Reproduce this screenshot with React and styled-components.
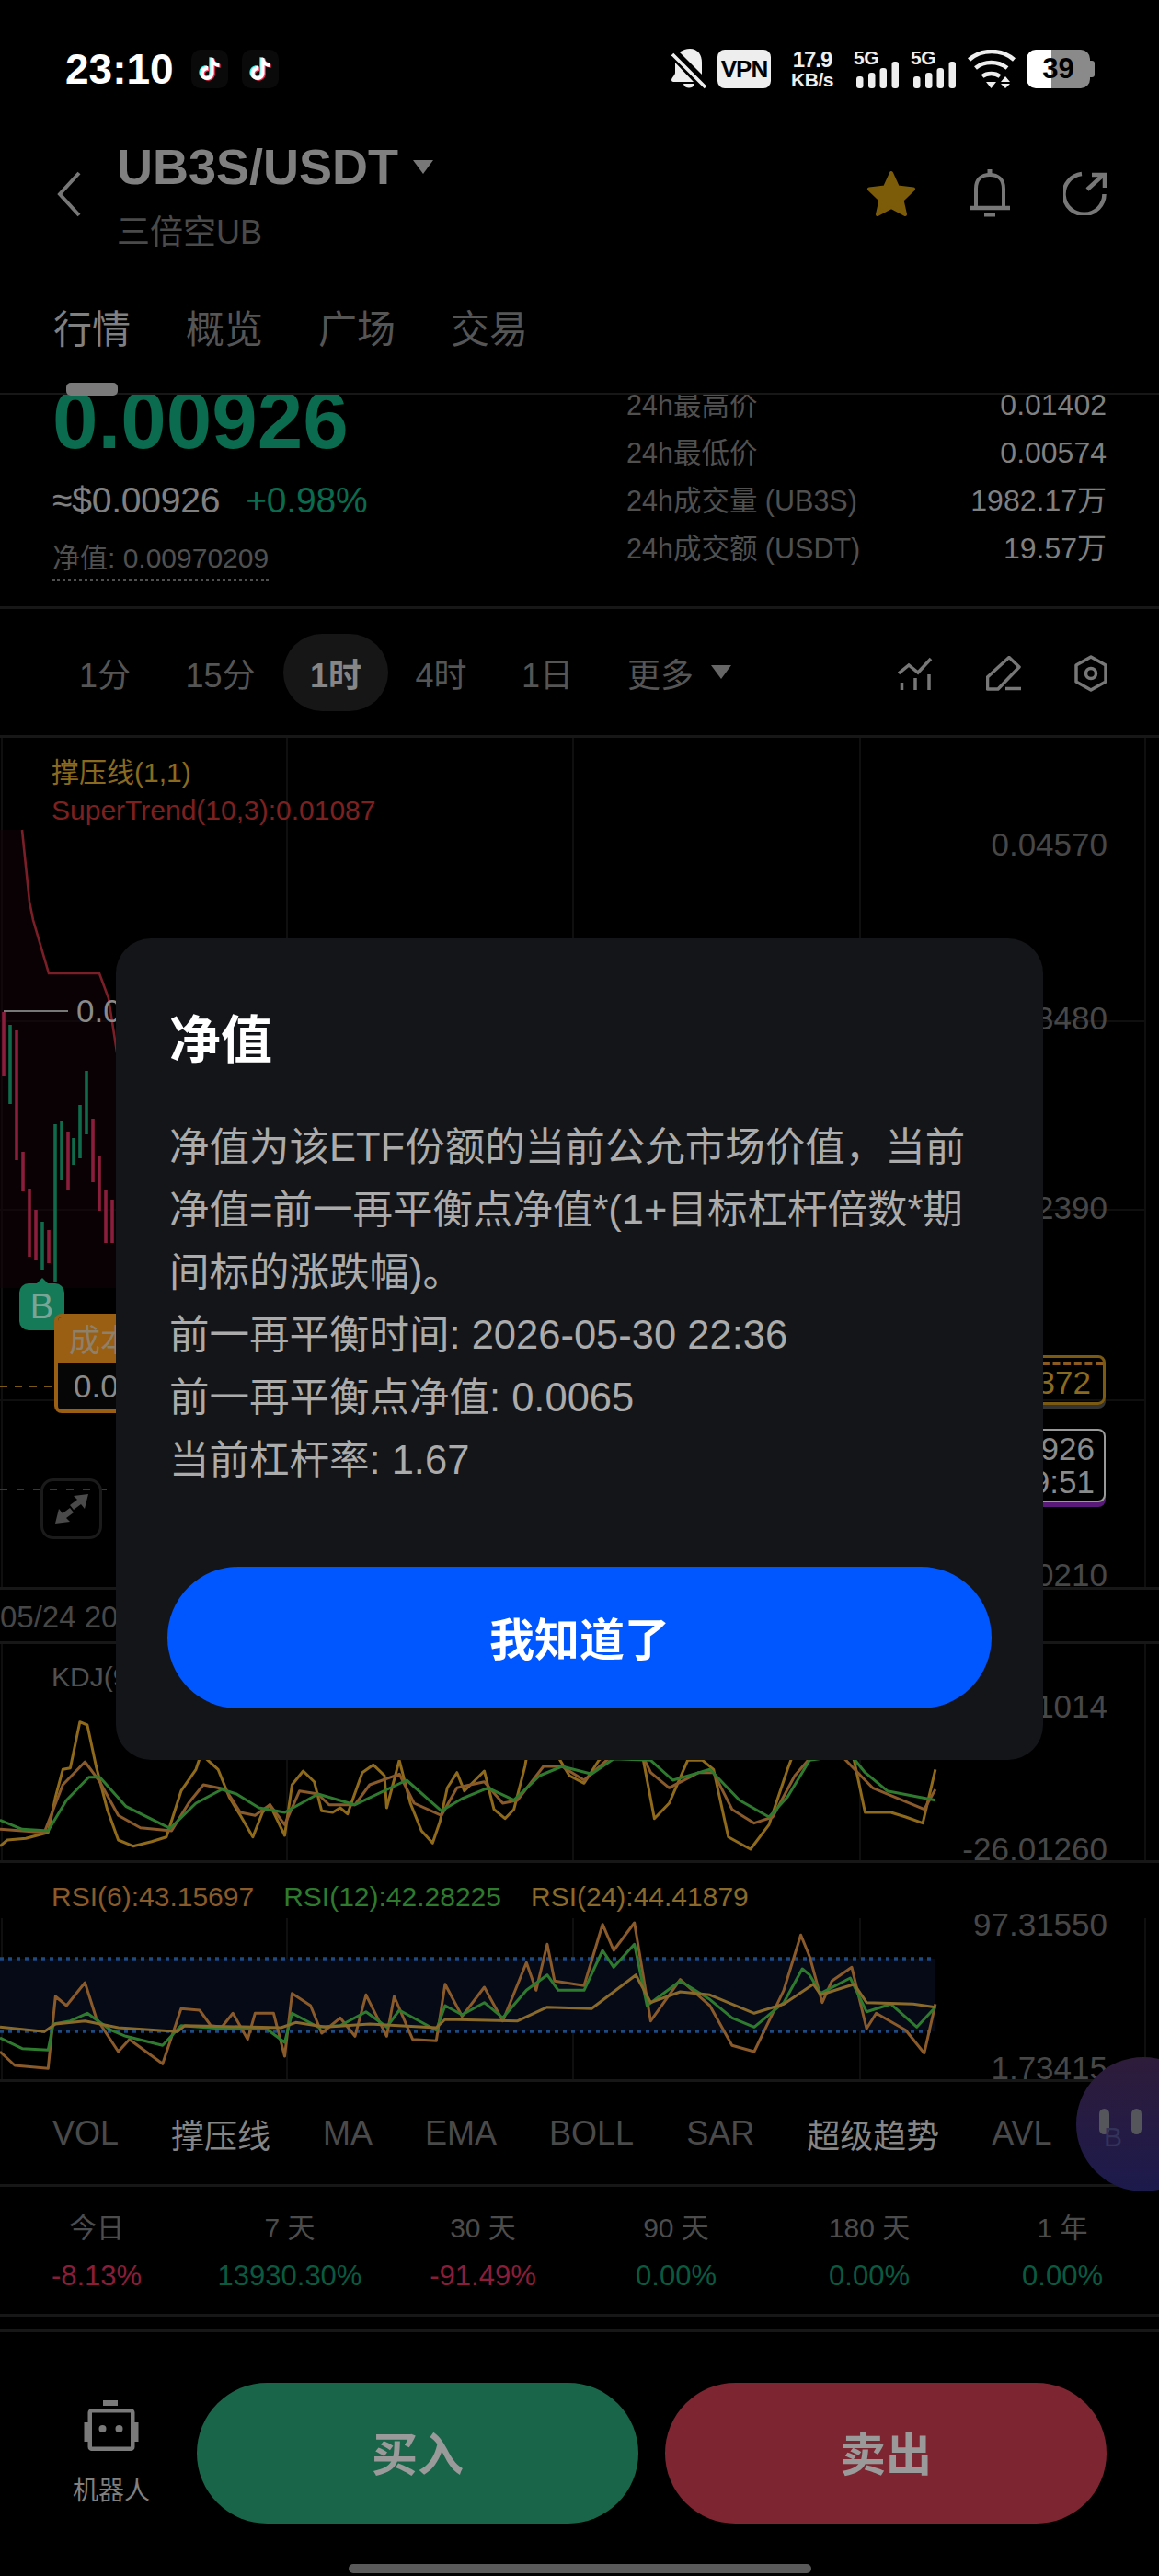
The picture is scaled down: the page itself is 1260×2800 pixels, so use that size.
import React from "react";
import styled, { createGlobalStyle } from "styled-components";

const Global = createGlobalStyle`
  html, body { margin: 0; padding: 0; background: #000; }
  * { box-sizing: border-box; }
`;

const SANS = `"Liberation Sans", "Noto Sans CJK SC", sans-serif`;
const DIM_GREEN = "#0a6b4e";
const LINE = "#171717";

const Page = styled.div`
  position: relative; width: 1260px; height: 2800px; overflow: hidden;
  background: #000; font-family: ${SANS}; color: #808080;
`;

/* status bar */
const StatusBar = styled.div`
  height: 150px; padding: 0 75px 0 71px; display: flex; align-items: center; justify-content: space-between;
`;
const StatusGroup = styled.div`display: flex; align-items: center; gap: ${(p) => p.$gap}px;`;
const Clock = styled.div`color: #fff; font-size: 46px; font-weight: 700; margin-right: 19px;`;
const AppBadge = styled.div`
  width: 40px; height: 42px; background: #0a0a0a; border-radius: 10px;
  display: flex; align-items: center; justify-content: center; margin-right: 15px;
`;
const VpnBadge = styled.div`
  width: 58px; height: 42px; border-radius: 8px; background: #eee; color: #000;
  font-size: 26px; font-weight: 700; letter-spacing: -1px; display: flex; align-items: center; justify-content: center;
`;
const Speed = styled.div`margin: 0 8px; width: 50px; color: #eee; font-weight: 700; text-align: center; display: flex; flex-direction: column; align-items: center;`;
const SpeedValue = styled.span`font-size: 24px; line-height: 22px; letter-spacing: -1px;`;
const SpeedUnit = styled.span`font-size: 21px; line-height: 21px; letter-spacing: -.5px; white-space: nowrap;`;
const SignalBox = styled.div`position: relative; width: 50px; height: 42px;`;
const SignalLabel = styled.span`position: absolute; left: 0; top: -3px; font-size: 21px; line-height: 24px; font-weight: 700; color: #eee; letter-spacing: -.5px;`;
const Battery = styled.div`
  position: relative; width: 69px; height: 42px; border-radius: 10px; color: #000;
  background: linear-gradient(90deg, #fff 27px, #8a8a8a 27px);
  font-size: 31px; font-weight: 700; display: flex; align-items: center; justify-content: center;
  &::after { content: ""; position: absolute; right: -5px; top: 12px; width: 5px; height: 18px; border-radius: 0 3px 3px 0; background: #8a8a8a; }
`;

/* header */
const Header = styled.div`height: 160px; padding: 7px 56px 0 62px; display: flex; align-items: flex-start;`;
const Back = styled.div`width: 65px; padding-top: 29px;`;
const TitleCol = styled.div`flex: 1; display: flex; flex-direction: column;`;
const TitleRow = styled.div`display: flex; align-items: center; gap: 16px; height: 48px; color: #808080; font-size: 54px; font-weight: 700;`;
const Caret = styled.span`
  width: 0; height: 0; border-left: 11px solid transparent; border-right: 11px solid transparent;
  border-top: 15px solid ${(p) => p.$color};
`;
const Sub = styled.div`margin-top: 27px; font-size: 36px; line-height: 42px; color: #4a4a4a;`;
const HeaderIcons = styled.div`display: flex; align-items: center; gap: 57px; padding-top: 27px;`;

/* tabs */
const Tabs = styled.div`
  position: relative; height: 119px; padding: 24px 0 0 58px; display: flex; gap: 60px;
  border-bottom: 2px solid ${LINE}; align-items: flex-start; z-index: 2;
`;
const Tab = styled.div`font-size: 42px; line-height: 50px; color: ${(p) => (p.$on ? "#808080" : "#555")};`;
const TabMark = styled.div`position: absolute; left: 72px; top: 106px; width: 56px; height: 14px; border-radius: 5px; background: #7a7a7a;`;

/* summary */
const Summary = styled.div`
  height: 233px; padding: 0 57px; display: flex; justify-content: space-between; overflow: hidden;
  border-bottom: 3px solid ${LINE};
`;
const PriceCol = styled.div`width: 624px;`;
const BigPrice = styled.div`margin-top: -17px; font-size: 89px; line-height: 88px; font-weight: 700; color: ${DIM_GREEN};`;
const PriceRow = styled.div`margin-top: 21px; display: flex; gap: 28px; font-size: 39px; line-height: 46px; color: #808080; letter-spacing: -.2px;`;
const Change = styled.span`color: ${DIM_GREEN};`;
const NetValue = styled.div`
  display: inline-block; margin-top: 20px; font-size: 30px; line-height: 40px; color: #505050; padding-bottom: 2px;
  border-bottom: 3px dotted #505050;
`;
const StatCol = styled.div`width: 522px; margin-top: -15px;`;
const StatRow = styled.div`display: flex; justify-content: space-between; height: 52px; line-height: 52px; font-size: 30.5px; color: #505050;`;
const StatVal = styled.span`color: #808080; font-size: 32px;`;

/* period row */
const PeriodRow = styled.div`height: 140px; padding: 0 56px 0 57px; display: flex; align-items: center; border-bottom: 3px solid ${LINE};`;
const Period = styled.div`
  width: ${(p) => p.$w}px; height: 84px; border-radius: 42px; display: flex; align-items: center; justify-content: center;
  font-size: 36px; color: ${(p) => (p.$on ? "#868686" : "#555")}; font-weight: ${(p) => (p.$on ? 700 : 400)};
  background: ${(p) => (p.$on ? "#161616" : "transparent")};
`;
const More = styled.div`margin-left: 29px; display: flex; align-items: center; gap: 19px; font-size: 36px; color: #555;`;
const PeriodIcons = styled.div`margin-left: auto; margin-top: 3px; display: flex; align-items: center; gap: 58px;`;

/* charts */
const ChartPanel = styled.div`position: relative; height: ${(p) => p.$h}px; border-bottom: 3px solid ${LINE};`;
const ChartSvg = styled.svg`position: absolute; left: 0; top: 0; width: 1260px; height: 100%; display: block;`;
const Legend = styled.div`position: absolute; left: 56px; top: ${(p) => p.$top}px; display: flex; flex-direction: column; gap: 5px;`;
const LegendRow = styled.div`display: flex; gap: 32px;`;
const LegendText = styled.span`font-size: 30px; line-height: 36px; color: ${(p) => p.$color}; white-space: nowrap;`;
const Axis = styled.span`
  position: absolute; right: 56px; top: ${(p) => p.$y}px; transform: translateY(-50%);
  font-size: 35px; line-height: 40px; color: #474747;
`;
const PriceTag = styled.div`
  position: absolute; left: 83px; top: ${(p) => p.$y}px; transform: translateY(-50%);
  font-size: 35px; line-height: 40px; color: #8a8a8a;
`;
const BuyMark = styled.div`
  position: absolute; left: 21px; top: 593px; width: 49px; height: 51px; border-radius: 10px; background: #147a58;
  color: #7aa596; font-size: 38px; display: flex; align-items: center; justify-content: center;
  &::before { content: ""; position: absolute; left: 18px; top: -6px; border-left: 7px solid transparent; border-right: 7px solid transparent; border-bottom: 7px solid #147a58; }
`;
const CostBox = styled.div`
  position: absolute; left: 59px; top: 626px; width: 200px; height: 108px; border: 4px solid #9a5f12; border-radius: 8px; background: #060606;
  overflow: hidden;
`;
const CostHead = styled.div`height: 50px; background: #9a5f12; color: #8f8069; font-size: 34px; line-height: 50px; padding-left: 12px;`;
const CostVal = styled.div`font-size: 35px; line-height: 50px; padding-left: 17px; color: #8a8a8a;`;
const ExpandBtn = styled.div`
  position: absolute; left: 44px; top: 805px; width: 67px; height: 66px; border: 3px solid #1b1b1b; border-radius: 14px;
  display: flex; align-items: center; justify-content: center;
`;
const CostTag = styled.div`
  position: absolute; right: 58px; top: 671px; width: 200px; height: 54px; border: 3px solid #7a5a12; border-radius: 8px;
  padding-right: 13px; text-align: right; font-size: 35px; line-height: 54px; color: #8a6a1e;
  box-shadow: 0 4px 0 #333;
  &::before { content: ""; position: absolute; left: 0; right: 0; top: 4px; border-top: 4px dashed #8a5a20; }
`;
const LastTag = styled.div`
  position: absolute; right: 58px; top: 751px; width: 200px; height: 80px; border: 2px solid #999; border-radius: 8px;
  padding: 2px 10px 0 0; text-align: right; font-size: 35px; line-height: 36px; color: #8a8a8a; background: #000;
  box-shadow: 0 5px 0 #5a1a7a;
`;
const DateRow = styled.div`height: 59px; font-size: 33px; line-height: 60px; color: #474747; border-bottom: 3px solid ${LINE}; white-space: nowrap;`;

/* indicators */
const IndicatorRow = styled.div`height: 114px; padding-left: 57px; display: flex; align-items: center; gap: 57px; border-bottom: 3px solid ${LINE};`;
const Indicator = styled.span`font-size: 36px; color: ${(p) => (p.$on ? "#868686" : "#4a4a4a")}; white-space: nowrap;`;
const Bubble = styled.div`
  position: absolute; left: 1170px; top: 2236px; width: 146px; height: 146px; border-radius: 50%;
  background: linear-gradient(180deg, #2e1c3a 0%, #1c1a4c 100%); z-index: 3;
`;
const Eye = styled.span`position: absolute; left: ${(p) => p.$x}px; top: 56px; width: 11px; height: 28px; border-radius: 6px; background: #55555c;`;
const BubbleLetter = styled.span`position: absolute; left: 30px; top: 70px; font-size: 30px; color: #33335a;`;

/* returns */
const Returns = styled.div`height: 141px; display: grid; grid-template-columns: repeat(6, 1fr); border-bottom: 3px solid ${LINE};`;
const ReturnCell = styled.div`display: flex; flex-direction: column; align-items: center; padding-top: 25px;`;
const ReturnLabel = styled.div`font-size: 30px; line-height: 40px; color: #4c4c4c;`;
const ReturnValue = styled.div`margin-top: 12px; font-size: 31px; line-height: 40px; color: ${(p) => (p.$neg ? "#8a1e3a" : "#0a5a40")};`;
const Spacer = styled.div`height: 17px; border-bottom: 3px solid ${LINE};`;

/* bottom */
const BottomBar = styled.div`height: 252px; padding: 55px 57px 0 0; display: flex; gap: 29px; align-items: flex-start;`;
const RobotCol = styled.div`width: 185px; padding: 19px 0 0 57px; display: flex; flex-direction: column; align-items: center; gap: 26px; font-size: 28px; color: #808080; line-height: 34px; white-space: nowrap;`;
const TradeBtn = styled.div`
  width: 480px; height: 153px; padding-bottom: 5px; border-radius: 77px; background: ${(p) => p.$bg}; color: #9a9a9a;
  font-size: 50px; font-weight: 700; display: flex; align-items: center; justify-content: center;
`;
const HomeBar = styled.div`width: 503px; height: 10px; margin: 0 auto; border-radius: 5px; background: #5a5a5a;`;

/* dialog */
const Dialog = styled.div`
  position: absolute; left: 126px; top: 1020px; width: 1008px; height: 893px; z-index: 5; border-radius: 38px;
  background: #141518; padding: 76px 56px 56px;
`;
const DialogTitle = styled.div`padding-left: 2px; font-size: 56px; line-height: 70px; font-weight: 700; color: #fff;`;
const DialogBody = styled.div`margin-top: 47px; padding-left: 2px; font-size: 43.5px; line-height: 68px; color: #ababab; white-space: nowrap;`;
const DialogBtn = styled.div`
  margin-top: 82px; height: 154px; padding-bottom: 4px; border-radius: 77px; background: #0057ff; color: #fff;
  font-size: 49px; font-weight: 700; display: flex; align-items: center; justify-content: center;
`;

/* drawing data */
const TIKTOK = "M12.525.02c1.31-.02 2.61-.01 3.91-.02.08 1.53.63 3.09 1.75 4.17 1.12 1.11 2.7 1.62 4.24 1.79v4.03c-1.44-.05-2.89-.35-4.2-.97-.57-.26-1.1-.59-1.62-.93-.01 2.92.01 5.84-.02 8.75-.08 1.4-.54 2.79-1.35 3.94-1.31 1.92-3.58 3.17-5.91 3.21-1.43.08-2.86-.31-4.08-1.03-2.02-1.19-3.44-3.37-3.65-5.71-.02-.5-.03-1-.01-1.49.18-1.9 1.12-3.72 2.58-4.96 1.66-1.44 3.98-2.13 6.15-1.72.02 1.48-.04 2.96-.04 4.44-.99-.32-2.15-.23-3.02.37-.63.41-1.11 1.04-1.36 1.75-.21.51-.15 1.07-.14 1.61.24 1.64 1.82 3.02 3.5 2.87 1.12-.01 2.19-.66 2.77-1.61.19-.33.4-.67.41-1.06.1-1.79.06-3.57.07-5.36.01-4.03-.01-8.05.02-12.07z";

const poly = (a) => a.map(([x, y]) => `${(x / 1.244).toFixed(1)},${(1780 + y / 3).toFixed(1)}`).join(" ");

const KDJ_J = [[0,680],[10,660],[35,655],[65,635],[75,520],[85,430],[95,425],[108,275],[118,285],[130,420],[145,560],[160,660],[180,680],[205,665],[225,650],[245,500],[265,430],[272,380],[295,430],[310,520],[325,580],[342,650],[355,570],[365,545],[385,645],[395,480],[410,435],[425,470],[435,565],[450,570],[460,555],[470,575],[490,440],[505,415],[520,450],[523,555],[540,400],[555,540],[570,630],[585,670],[595,600],[605,490],[618,440],[628,500],[655,435],[668,560],[683,590],[695,560],[710,420],[715,350],[745,350],[770,450],[790,475],[810,400],[860,300],[870,400],[885,590],[905,540],[930,400],[950,400],[965,430],[985,650],[1015,690],[1040,610],[1065,430],[1085,300],[1140,320],[1155,400],[1170,570],[1205,570],[1225,585],[1248,605],[1265,430]];
const KDJ_K = [[0,625],[60,635],[85,480],[115,405],[135,470],[160,580],[190,620],[232,630],[255,540],[275,480],[305,495],[325,570],[345,580],[365,545],[385,610],[405,500],[430,510],[445,545],[480,545],[500,480],[540,445],[560,540],[597,580],[618,490],[655,470],[680,540],[700,530],[735,420],[760,420],[790,465],[830,380],[860,340],[880,440],[905,490],[945,440],[965,440],[990,560],[1020,605],[1045,585],[1075,450],[1100,380],[1140,390],[1160,440],[1180,490],[1250,560],[1265,495]];
const KDJ_D = [[0,595],[30,625],[65,630],[90,530],[120,455],[135,455],[170,550],[230,622],[265,540],[300,495],[320,510],[350,555],[385,570],[430,510],[480,545],[550,465],[597,565],[625,525],[660,490],[695,530],[730,450],[760,420],[800,445],[830,395],[880,400],[910,465],[960,430],[1000,530],[1040,585],[1065,520],[1095,400],[1150,380],[1170,440],[1200,500],[1265,530]];
const RSI_6 = [[0,1350],[20,1395],[65,1405],[75,1170],[90,1200],[115,1125],[130,1240],[160,1350],[175,1310],[220,1390],[245,1210],[270,1215],[285,1265],[300,1270],[315,1225],[335,1310],[345,1225],[370,1225],[385,1365],[395,1160],[420,1200],[435,1290],[460,1240],[480,1300],[495,1165],[523,1300],[533,1170],[558,1310],[590,1315],[602,1130],[625,1235],[655,1140],[680,1250],[712,1060],[725,1150],[740,1000],[750,1120],[790,1135],[815,935],[830,1020],[858,930],[880,1250],[920,1115],[960,1200],[990,1330],[1020,1350],[1060,1150],[1083,970],[1095,1040],[1112,1190],[1125,1120],[1152,1075],[1172,1275],[1185,1225],[1225,1280],[1250,1355],[1265,1195]];
const RSI_12 = [[0,1305],[30,1340],[65,1345],[72,1260],[95,1250],[118,1225],[150,1280],[170,1300],[220,1330],[245,1265],[300,1275],[360,1275],[385,1320],[395,1225],[430,1270],[460,1265],[495,1220],[523,1270],[540,1215],[590,1280],[602,1200],[625,1230],[655,1190],[680,1240],[712,1150],[740,1100],[755,1150],[790,1150],[815,1020],[830,1075],[858,1000],[875,1200],[920,1120],[960,1180],[990,1240],[1020,1270],[1060,1190],[1085,1080],[1095,1100],[1110,1160],[1150,1110],[1172,1220],[1205,1195],[1240,1270],[1265,1205]];
const RSI_24 = [[0,1270],[60,1285],[75,1260],[115,1250],[160,1272],[240,1285],[250,1265],[380,1272],[400,1255],[440,1270],[500,1260],[590,1272],[602,1245],[700,1250],[740,1205],[800,1210],[860,1100],[880,1190],[920,1155],[960,1165],[1020,1225],[1060,1195],[1100,1130],[1110,1165],[1155,1130],[1172,1190],[1235,1195],[1265,1205]];

const CANDLES = [
  [4,1100,1170,0],[11,1114,1200,1],[18,1120,1261,0],[25,1252,1295,0],[32,1292,1366,0],[39,1315,1370,0],
  [46,1328,1380,1],[53,1337,1373,0],[60,1222,1393,1],[67,1218,1283,1],[74,1230,1294,0],[80,1237,1266,1],
  [87,1201,1259,1],[94,1164,1233,1],[101,1216,1285,0],[108,1256,1316,0],[115,1293,1351,0],[122,1304,1351,0],
];

const GridV = ({ top, bottom }) => (
  <g stroke="#0f0f0f" strokeWidth="2">
    {[2, 312, 623, 935, 1245].map((x) => <line key={x} x1={x} x2={x} y1={top} y2={bottom} />)}
  </g>
);

const Line = ({ pts, color, w = 3 }) => (
  <polyline points={poly(pts)} fill="none" stroke={color} strokeWidth={w} strokeLinejoin="round" />
);

const Signal = () => (
  <SignalBox>
    <SignalLabel>5G</SignalLabel>
    <svg width="50" height="42" viewBox="0 0 50 42" fill="#eee">
      <rect x="3" y="29" width="7.500" height="13" rx="3" />
      <rect x="16" y="25" width="7.500" height="17" rx="3" />
      <rect x="28.500" y="20" width="7.500" height="22" rx="3" />
      <rect x="41.500" y="13" width="7.500" height="29" rx="3" />
    </svg>
  </SignalBox>
);

const TikTok = () => (
  <AppBadge>
    <svg width="26" height="30" viewBox="-1 -1 26 26">
      <path d={TIKTOK} fill="#25f4ee" transform="translate(-1.2,-.8)" />
      <path d={TIKTOK} fill="#fe2c55" transform="translate(1.2,.8)" />
      <path d={TIKTOK} fill="#fff" />
    </svg>
  </AppBadge>
);

export default function App() {
  return (
    <Page>
      <Global />
      <StatusBar>
        <StatusGroup $gap={0}>
          <Clock>23:10</Clock>
          <TikTok />
          <TikTok />
        </StatusGroup>
        <StatusGroup $gap={12}>
          <svg width="38" height="44" viewBox="0 0 38 44">
            <path d="M9 4C12 1.500 16 0 20 0c9 0 13 7 13 15v13z" fill="#eee" />
            <path d="M4 15v11c0 3-4 5-4 8 0 1 1 2 2 2h22z" fill="#eee" />
            <path d="M13 38h12c-1 6-11 6-12 0z" fill="#eee" />
            <path d="M28 36h4L2 4v0z" fill="#eee" opacity="0" />
            <line x1="1" y1="6" x2="37" y2="42" stroke="#eee" strokeWidth="3.500" />
          </svg>
          <VpnBadge>VPN</VpnBadge>
          <Speed>
            <SpeedValue>17.9</SpeedValue>
            <SpeedUnit>KB/s</SpeedUnit>
          </Speed>
          <Signal />
          <Signal />
          <svg width="52" height="42" viewBox="0 0 52 42" fill="none" stroke="#eee" strokeWidth="4.500">
            <path d="M1.500 11C15 -1 37 -1 50.500 11" />
            <path d="M8.500 20C18 12 33 12 43 20" />
            <path d="M16 29C21 25 30 25 35 29" />
            <path d="M20 35h11l-5.500 7z" stroke="none" fill="#eee" />
            <path d="M41 29l5 6h-10z M41 42l5-5h-10z" stroke="none" fill="#eee" />
          </svg>
          <Battery>39</Battery>
        </StatusGroup>
      </StatusBar>

      <Header>
        <Back>
          <svg width="26" height="50" viewBox="0 0 26 50" fill="none" stroke="#777" strokeWidth="4">
            <path d="M24 2L3 25l21 23" />
          </svg>
        </Back>
        <TitleCol>
          <TitleRow>UB3S/USDT <Caret $color="#777" /></TitleRow>
          <Sub>三倍空UB</Sub>
        </TitleCol>
        <HeaderIcons>
          <svg width="54" height="50" viewBox="0 0 54 50">
            <path d="M27 3l7 15.500 17 2-12.500 12 3.500 15.500L27 40 12 48l3.500-15.500L3 20.500l17-2z" fill="#7c5c08" stroke="#7c5c08" strokeWidth="4" strokeLinejoin="round" />
          </svg>
          <svg width="46" height="52" viewBox="0 0 46 52" fill="none" stroke="#777" strokeWidth="4">
            <path d="M8 42V21C8 11 14 6 23 6s15 5 15 15v21" />
            <path d="M1 42h44" strokeWidth="4.500" />
            <path d="M23 0v6" strokeWidth="5" />
            <path d="M17 49.500h12" strokeWidth="4" />
          </svg>
          <svg width="48" height="48" viewBox="0 0 48 48" fill="none" stroke="#777" strokeWidth="4.500">
            <path d="M20 3A22 22 0 1 0 44.500 25" />
            <path d="M26 20L43.500 4M31 4h14v14" />
          </svg>
        </HeaderIcons>
      </Header>

      <Tabs>
        <Tab $on>行情</Tab>
        <Tab>概览</Tab>
        <Tab>广场</Tab>
        <Tab>交易</Tab>
        <TabMark />
      </Tabs>

      <Summary>
        <PriceCol>
          <BigPrice>0.00926</BigPrice>
          <PriceRow>
            <span>≈$0.00926</span>
            <Change>+0.98%</Change>
          </PriceRow>
          <NetValue>净值: 0.00970209</NetValue>
        </PriceCol>
        <StatCol>
          <StatRow><span>24h最高价</span><StatVal>0.01402</StatVal></StatRow>
          <StatRow><span>24h最低价</span><StatVal>0.00574</StatVal></StatRow>
          <StatRow><span>24h成交量 (UB3S)</span><StatVal>1982.17万</StatVal></StatRow>
          <StatRow><span>24h成交额 (USDT)</span><StatVal>19.57万</StatVal></StatRow>
        </StatCol>
      </Summary>

      <PeriodRow>
        <Period $w={114}>1分</Period>
        <Period $w={137}>15分</Period>
        <Period $w={114} $on>1时</Period>
        <Period $w={115}>4时</Period>
        <Period $w={116}>1日</Period>
        <More>更多 <Caret $color="#666" /></More>
        <PeriodIcons>
          <svg width="38" height="38" viewBox="0 0 38 38" fill="none" stroke="#777" strokeWidth="3.500">
            <path d="M1 19l11-9 10 8L36 3" />
            <path d="M4.500 29v8M19 24v13M34 20v17" />
          </svg>
          <svg width="38" height="38" viewBox="0 0 38 38" fill="none" stroke="#777" strokeWidth="3.500">
            <path d="M1.500 23L25 1.500 36 12 13 36H1.500z" strokeLinejoin="round" />
            <path d="M21 35.500h17" />
          </svg>
          <svg width="36" height="40" viewBox="0 0 36 40" fill="none" stroke="#777" strokeWidth="3.500">
            <path d="M18 2l16 9v18l-16 9-16-9V11z" strokeLinejoin="round" />
            <circle cx="18" cy="20" r="5.500" />
          </svg>
        </PeriodIcons>
      </PeriodRow>

      <ChartPanel $h={926}>
        <ChartSvg viewBox="0 802 1260 923">
          <GridV top={802} bottom={1728} />
          <g stroke="#0f0f0f" strokeWidth="2">
            {[1110, 1315, 1522].map((y) => <line key={y} x1="0" x2="1245" y1={y} y2={y} />)}
          </g>
          <polygon points="24,902 32,980 36,1000 53,1058 108,1058 118,1085 130,1160 130,1400 0,1400 0,902" fill="#120206" opacity=".5" />
          <polyline points="24,902 32,980 36,1000 53,1058 108,1058 118,1085 128,1150" fill="none" stroke="#7a1e28" strokeWidth="2.600" />
          <line x1="4" x2="74" y1="1099" y2="1099" stroke="#777" strokeWidth="2" />
          {CANDLES.map(([x, a, b, up]) => (
            <line key={x} x1={x} x2={x} y1={a} y2={b} stroke={up ? "#0f6b4c" : "#8a1e3c"} strokeWidth="3.600" />
          ))}
          <line x1="0" x2="59" y1="1507" y2="1507" stroke="#7a5a10" strokeWidth="2" strokeDasharray="8 8" />
          <line x1="0" x2="119" y1="1619" y2="1619" stroke="#5a1a7a" strokeWidth="2" strokeDasharray="8 10" />
        </ChartSvg>
        <Legend $top={20}>
          <LegendText $color="#8a6a1e">撑压线(1,1)</LegendText>
          <LegendText $color="#7c2020">SuperTrend(10,3):0.01087</LegendText>
        </Legend>
        <Axis $y={116}>0.04570</Axis>
        <Axis $y={305}>0.03480</Axis>
        <Axis $y={511}>0.02390</Axis>
        <Axis $y={910}>0.00210</Axis>
        <PriceTag $y={297}>0.01402</PriceTag>
        <BuyMark>B</BuyMark>
        <CostBox>
          <CostHead>成本价</CostHead>
          <CostVal>0.00700</CostVal>
        </CostBox>
        <ExpandBtn>
          <svg width="36" height="32" viewBox="0 0 36 32" fill="#4a4a4a">
            <path d="M36 0l-4 16-4-5-8 6-4-5 8-6-4-4z" />
            <path d="M0 32l4-16 4 5 8-6 4 5-8 6 4 4z" />
          </svg>
        </ExpandBtn>
        <CostTag>0.01372</CostTag>
        <LastTag>0.00926<br />00:09:51</LastTag>
      </ChartPanel>

      <DateRow>05/24 20:00</DateRow>

      <ChartPanel $h={238}>
        <ChartSvg viewBox="0 1787 1260 235">
          <GridV top={1787} bottom={2025} />
          <Line pts={KDJ_J} color="#8f6a1a" />
          <Line pts={KDJ_K} color="#8a5a2a" />
          <Line pts={KDJ_D} color="#2e7a2e" />
        </ChartSvg>
        <Legend $top={18}>
          <LegendText $color="#505050">KDJ(9,3,3)</LegendText>
        </Legend>
        <Axis $y={68}>151.01014</Axis>
        <Axis $y={223}>-26.01260</Axis>
      </ChartPanel>

      <ChartPanel $h={238}>
        <ChartSvg viewBox="0 2025 1260 235">
          <GridV top={2085} bottom={2263} />
          <rect x="0" y="2129" width="1017" height="79" fill="#050a16" />
          <g stroke="#1e4a82" strokeWidth="3.500" strokeDasharray="4 5">
            <line x1="0" x2="1014" y1="2129" y2="2129" />
            <line x1="0" x2="1014" y1="2208" y2="2208" />
          </g>
          <Line pts={RSI_6} color="#8a5a2a" />
          <Line pts={RSI_12} color="#2e7a2e" />
          <Line pts={RSI_24} color="#8a6a2a" />
        </ChartSvg>
        <Legend $top={19}>
          <LegendRow>
            <LegendText $color="#8a5a2a">RSI(6):43.15697</LegendText>
            <LegendText $color="#2e7a2e">RSI(12):42.28225</LegendText>
            <LegendText $color="#8a6a2a">RSI(24):44.41879</LegendText>
          </LegendRow>
        </Legend>
        <Axis $y={67}>97.31550</Axis>
        <Axis $y={223}>1.73415</Axis>
      </ChartPanel>

      <IndicatorRow>
        <Indicator>VOL</Indicator>
        <Indicator $on>撑压线</Indicator>
        <Indicator>MA</Indicator>
        <Indicator>EMA</Indicator>
        <Indicator>BOLL</Indicator>
        <Indicator>SAR</Indicator>
        <Indicator $on>超级趋势</Indicator>
        <Indicator>AVL</Indicator>
      </IndicatorRow>

      <Bubble>
        <Eye $x={25} />
        <Eye $x={60} />
        <BubbleLetter>B</BubbleLetter>
      </Bubble>

      <Returns>
        <ReturnCell><ReturnLabel>今日</ReturnLabel><ReturnValue $neg>-8.13%</ReturnValue></ReturnCell>
        <ReturnCell><ReturnLabel>7 天</ReturnLabel><ReturnValue>13930.30%</ReturnValue></ReturnCell>
        <ReturnCell><ReturnLabel>30 天</ReturnLabel><ReturnValue $neg>-91.49%</ReturnValue></ReturnCell>
        <ReturnCell><ReturnLabel>90 天</ReturnLabel><ReturnValue>0.00%</ReturnValue></ReturnCell>
        <ReturnCell><ReturnLabel>180 天</ReturnLabel><ReturnValue>0.00%</ReturnValue></ReturnCell>
        <ReturnCell><ReturnLabel>1 年</ReturnLabel><ReturnValue>0.00%</ReturnValue></ReturnCell>
      </Returns>
      <Spacer />

      <BottomBar>
        <RobotCol>
          <svg width="60" height="56" viewBox="0 0 60 56">
            <rect x="21" y="0" width="16" height="6" fill="#7a7a7a" />
            <rect x="6.750" y="11.250" width="46.500" height="41.500" rx="2" fill="none" stroke="#7a7a7a" strokeWidth="4.500" />
            <rect x="0.500" y="24" width="4.500" height="21" fill="#7a7a7a" />
            <rect x="55" y="24" width="4.500" height="21" fill="#7a7a7a" />
            <circle cx="20.500" cy="31" r="4" fill="#7a7a7a" />
            <circle cx="38.500" cy="31" r="4" fill="#7a7a7a" />
          </svg>
          机器人
        </RobotCol>
        <TradeBtn $bg="#19654a">买入</TradeBtn>
        <TradeBtn $bg="#7d2530">卖出</TradeBtn>
      </BottomBar>
      <HomeBar />

      <Dialog>
        <DialogTitle>净值</DialogTitle>
        <DialogBody>
          净值为该ETF份额的当前公允市场价值，当前<br />
          净值=前一再平衡点净值*(1+目标杠杆倍数*期<br />
          间标的涨跌幅)。<br />
          前一再平衡时间: 2026-05-30 22:36<br />
          前一再平衡点净值: 0.0065<br />
          当前杠杆率: 1.67
        </DialogBody>
        <DialogBtn>我知道了</DialogBtn>
      </Dialog>
    </Page>
  );
}
